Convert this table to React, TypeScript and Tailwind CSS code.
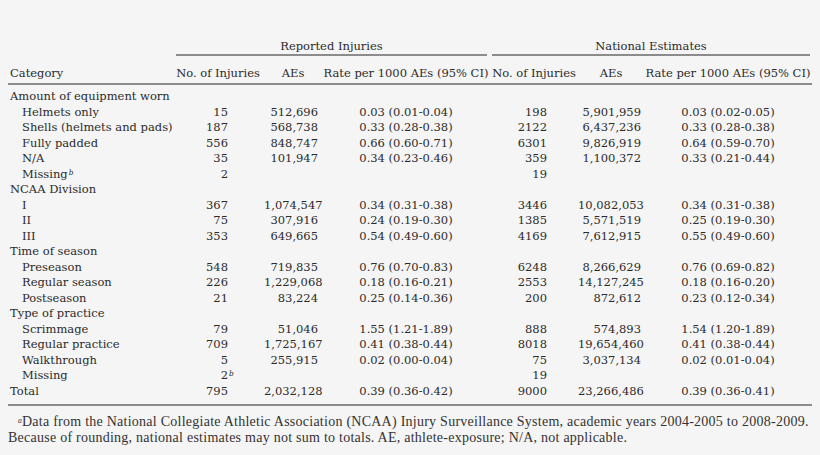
import React from "react";

type Row = {
  label: string;
  indent?: boolean;
  labelSup?: string;
  n?: string;
  nSup?: string;
  ae?: string;
  rate?: string;
  nn?: string;
  nae?: string;
  nrate?: string;
};

const rows: Row[] = [
  { label: "Amount of equipment worn" },
  { label: "Helmets only", indent: true, n: "15", ae: "512,696", rate: "0.03 (0.01-0.04)", nn: "198", nae: "5,901,959", nrate: "0.03 (0.02-0.05)" },
  { label: "Shells (helmets and pads)", indent: true, n: "187", ae: "568,738", rate: "0.33 (0.28-0.38)", nn: "2122", nae: "6,437,236", nrate: "0.33 (0.28-0.38)" },
  { label: "Fully padded", indent: true, n: "556", ae: "848,747", rate: "0.66 (0.60-0.71)", nn: "6301", nae: "9,826,919", nrate: "0.64 (0.59-0.70)" },
  { label: "N/A", indent: true, n: "35", ae: "101,947", rate: "0.34 (0.23-0.46)", nn: "359", nae: "1,100,372", nrate: "0.33 (0.21-0.44)" },
  { label: "Missing", labelSup: "b", indent: true, n: "2", nn: "19" },
  { label: "NCAA Division" },
  { label: "I", indent: true, n: "367", ae: "1,074,547", rate: "0.34 (0.31-0.38)", nn: "3446", nae: "10,082,053", nrate: "0.34 (0.31-0.38)" },
  { label: "II", indent: true, n: "75", ae: "307,916", rate: "0.24 (0.19-0.30)", nn: "1385", nae: "5,571,519", nrate: "0.25 (0.19-0.30)" },
  { label: "III", indent: true, n: "353", ae: "649,665", rate: "0.54 (0.49-0.60)", nn: "4169", nae: "7,612,915", nrate: "0.55 (0.49-0.60)" },
  { label: "Time of season" },
  { label: "Preseason", indent: true, n: "548", ae: "719,835", rate: "0.76 (0.70-0.83)", nn: "6248", nae: "8,266,629", nrate: "0.76 (0.69-0.82)" },
  { label: "Regular season", indent: true, n: "226", ae: "1,229,068", rate: "0.18 (0.16-0.21)", nn: "2553", nae: "14,127,245", nrate: "0.18 (0.16-0.20)" },
  { label: "Postseason", indent: true, n: "21", ae: "83,224", rate: "0.25 (0.14-0.36)", nn: "200", nae: "872,612", nrate: "0.23 (0.12-0.34)" },
  { label: "Type of practice" },
  { label: "Scrimmage", indent: true, n: "79", ae: "51,046", rate: "1.55 (1.21-1.89)", nn: "888", nae: "574,893", nrate: "1.54 (1.20-1.89)" },
  { label: "Regular practice", indent: true, n: "709", ae: "1,725,167", rate: "0.41 (0.38-0.44)", nn: "8018", nae: "19,654,460", nrate: "0.41 (0.38-0.44)" },
  { label: "Walkthrough", indent: true, n: "5", ae: "255,915", rate: "0.02 (0.00-0.04)", nn: "75", nae: "3,037,134", nrate: "0.02 (0.01-0.04)" },
  { label: "Missing", indent: true, n: "2", nSup: "b", nn: "19" },
  { label: "Total", n: "795", ae: "2,032,128", rate: "0.39 (0.36-0.42)", nn: "9000", nae: "23,266,486", nrate: "0.39 (0.36-0.41)" },
];

const cols = "grid grid-cols-[164px_92px_58px_168px_88px_66px_168px]";

function Sup({ children }: { children: React.ReactNode }) {
  return (
    <span className="relative inline-block w-0 overflow-visible leading-none">
      <span className="absolute left-[1px] -top-[9px] text-[7.5px] italic">{children}</span>
    </span>
  );
}

export default function App() {
  return (
    <div
      className="w-[820px] h-[455px] bg-[#f5f5f5] text-[#2b2b2b] overflow-hidden pl-[8px] pt-[38px]"
      style={{ fontFamily: '"DejaVu Serif", serif' }}
    >
      <div className="w-[804px] text-[11.5px]">
        {/* spanner row */}
        <div className="flex h-[16px] leading-[16px]">
          <div className="w-[168px]" />
          <div className="w-[311px] text-center">Reported Injuries</div>
          <div className="w-[5px]" />
          <div className="w-[318px] text-center">National Estimates</div>
        </div>
        <div className="flex h-[2px]">
          <div className="w-[168px]" />
          <div className="w-[311px] bg-[#8c8c8c]" />
          <div className="w-[5px]" />
          <div className="w-[318px] bg-[#8c8c8c]" />
        </div>
        {/* header row */}
        <div className={`${cols} mt-[9px] h-[16px] leading-[16px] whitespace-nowrap`}>
          <div className="pl-[2px]">Category</div>
          <div className="text-center">No. of Injuries</div>
          <div className="text-center">AEs</div>
          <div className="text-center">Rate per 1000 AEs (95% CI)</div>
          <div className="text-center">No. of Injuries</div>
          <div className="text-center">AEs</div>
          <div className="text-center">Rate per 1000 AEs (95% CI)</div>
        </div>
        <div className="h-[2px] mt-[2px] bg-[#8c8c8c]" />
        {/* body */}
        <div className="mt-[4px]">
          {rows.map((r, i) => (
            <div key={i} className={`${cols} h-[15.5px] leading-[15.5px] whitespace-nowrap`}>
              <div className={r.indent ? "pl-[14px]" : "pl-[2px]"}>
                {r.label}
                {r.labelSup && <Sup>{r.labelSup}</Sup>}
              </div>
              <div className="text-right pr-[36px]">
                {r.n}
                {r.nSup && <Sup>{r.nSup}</Sup>}
              </div>
              <div className="text-right pr-[4px]">{r.ae}</div>
              <div className="text-center">{r.rate}</div>
              <div className="text-right pr-[31px]">{r.nn}</div>
              <div className="text-right pr-[3px]">{r.nae}</div>
              <div className="text-center">{r.nrate}</div>
            </div>
          ))}
        </div>
        <div className="h-[2px] mt-[5px] bg-[#8c8c8c]" />
      </div>
      {/* footer */}
      <div
        className="w-[808px] mt-[8px] text-[14px] leading-[16px] text-[#333] tracking-[0.25px] whitespace-nowrap"
        style={{ fontFamily: '"Liberation Serif", serif' }}
      >
        <div className="pl-[9px]">
          <Sup>a</Sup>
          <span className="pl-[5px]">Data from the National Collegiate Athletic Association (NCAA) Injury Surveillance System, academic years 2004-2005 to 2008-2009.</span>
        </div>
        <div>Because of rounding, national estimates may not sum to totals. AE, athlete-exposure; N/A, not applicable.</div>
      </div>
    </div>
  );
}
